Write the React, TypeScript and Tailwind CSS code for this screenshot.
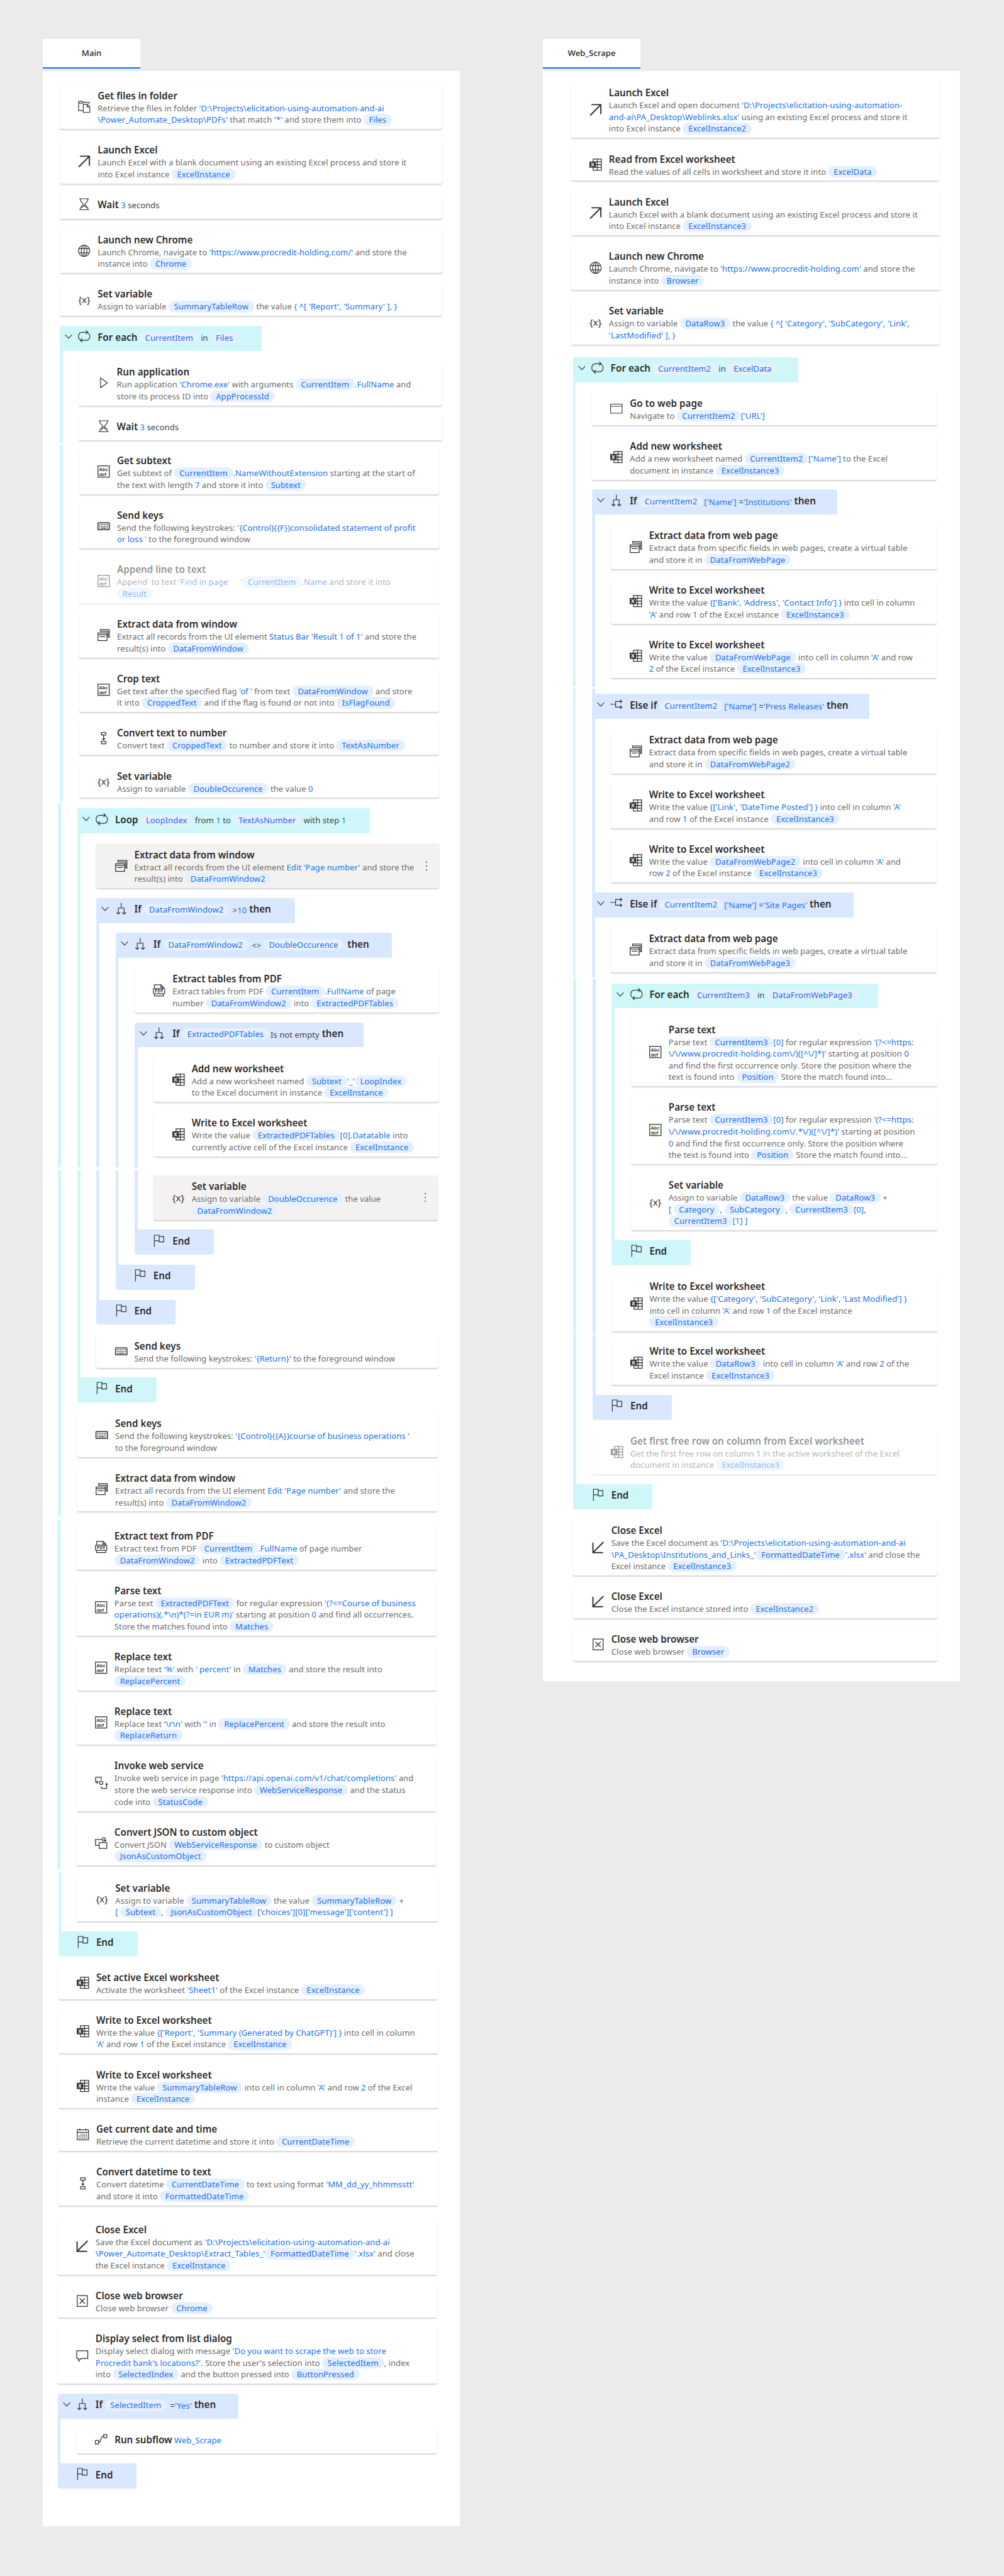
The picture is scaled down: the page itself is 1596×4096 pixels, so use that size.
import type { ReactNode } from 'react';

/*
 * Text markup used in the flow data:
 *   «Name»  a variable pill
 *   ‹text›  a literal value, drawn in blue
 */

type IconName =
  | 'files' | 'launch' | 'wait' | 'globe' | 'var' | 'loop' | 'play' | 'abc' | 'keys' | 'windows'
  | 'convert' | 'if' | 'elseif' | 'pdf' | 'excel' | 'end' | 'service' | 'json' | 'calendar'
  | 'close' | 'closebox' | 'comment' | 'subflow' | 'browser';

type Item = {
  kind?: 'card' | 'head' | 'elseif' | 'end';
  tone?: 'c' | 'b';
  rails?: string;
  icon: IconName;
  title: string;
  extra?: string;
  tail?: string;
  lines?: string[];
  width?: string;
  gap?: string;
  hovered?: boolean;
  disabled?: boolean;
};

const Svg = ({ children, w = 1.2 }: { children: ReactNode; w?: number }) => (
  <svg
    viewBox="0 0 20 20"
    className="block size-[19.500px] overflow-visible"
    fill="none"
    stroke="#323130"
    strokeWidth={w}
  >
    {children}
  </svg>
);

function Icon({ name }: { name: IconName }) {
  switch (name) {
    case 'files':
      return (
        <Svg>
          <path d="M8 16.3H1V1.2h6.2l1.4 1.7h9.6v2.6M1 4.3h6.2l1.4-1.4" />
          <path d="M8.600 6.200h6.600l4 4v9H8.600zM15 6.400v4h4" />
        </Svg>
      );
    case 'launch':
      return (
        <Svg w={2}>
          <path d="M3.200 1.400h15.400V17M18.400 1.600 1.200 19" />
        </Svg>
      );
    case 'close':
      return (
        <Svg w={2}>
          <path d="M1.600 2v16.200H18M1.800 18 18.800 1" />
        </Svg>
      );
    case 'wait':
      return (
        <Svg>
          <path d="M2 1h16M2 19h16M4 1v2.600c0 2.400 4.600 4.600 4.600 6.400S4 14 4 16.400V19M16 1v2.600c0 2.400-4.600 4.600-4.600 6.400s4.600 4 4.600 6.400V19M5.800 16l4.200-4.400 4.200 4.400" />
        </Svg>
      );
    case 'globe':
      return (
        <Svg>
          <circle cx="10" cy="10" r="9.200" />
          <ellipse cx="10" cy="10" rx="4.600" ry="9.200" />
          <path d="M10 .8v18.400M1.600 6.600h16.800M1.600 13.400h16.800" />
        </Svg>
      );
    case 'var':
      return (
        <span className="flex h-5 items-center text-[15px] leading-none text-[#323130]">
          {'{x}'}
        </span>
      );
    case 'loop':
      return (
        <Svg>
          <path d="M6 17C-1.500 14.500-1 3.400 7.600 3.400H16M12.800.4l3.200 3-3.200 3M14 3.400c7.500 2.300 7 13.200-1.600 13.200H4M7.200 13.600l-3.200 3 3.200 3" />
        </Svg>
      );
    case 'play':
      return (
        <Svg>
          <path d="M5 2v16l11-8z" />
        </Svg>
      );
    case 'abc':
      return (
        <Svg w={1.3}>
          <rect x=".8" y=".8" width="18.400" height="18.400" />
          <text x="2.600" y="8.800" fontSize="8" fontWeight="600" fill="#323130" stroke="none" textLength="14.600">
            Abc
          </text>
          <text x="2.600" y="17.200" fontSize="8" fontWeight="600" fill="#323130" stroke="none" textLength="12">
            def
          </text>
        </Svg>
      );
    case 'keys':
      return (
        <Svg>
          <rect x=".6" y="4.400" width="18.800" height="11.200" rx=".8" strokeWidth="1.500" />
          <path d="M2.600 7.200h15M2.600 10h15" strokeDasharray="1.500 1.200" strokeWidth="1.400" />
          <path d="M2.600 12.900h1.600M5.200 12.900h9.600M15.800 12.900h1.600" strokeWidth="1.400" />
        </Svg>
      );
    case 'windows':
      return (
        <Svg w={1.3}>
          <rect x=".8" y="6.600" width="14.600" height="12.400" />
          <path d="M.8 9.400h14.600M3.400 12.600h9.400M4.600 4.200V1.200h14.600v12.600h-2.200M4.600 3.800h12.600v9.800" />
        </Svg>
      );
    case 'convert':
      return (
        <Svg w={1.3}>
          <rect x="6.400" y=".8" width="7.200" height="4" />
          <rect x="6.400" y="15.200" width="7.200" height="4" />
          <path d="M10 4.800v8M7.800 10.400l2.200 2.400 2.200-2.400" />
        </Svg>
      );
    case 'if':
      return (
        <Svg>
          <path d="M10 .6v8.400M5.300 19V9h9.400v10M2.200 16.200 5.300 19l3-2.800M11.700 16.200l3 2.800 3.100-2.800" />
        </Svg>
      );
    case 'elseif':
      return (
        <Svg>
          <path d="M.2 9h8.600M19 4.400H8.800v9.400H19M16.200 1.600 19 4.400l-2.800 2.800M16.200 11l2.800 2.800-2.800 2.800" />
        </Svg>
      );
    case 'pdf':
      return (
        <Svg w={1.3}>
          <path d="M2.600 7V1h10.600l4.200 4v2M13 1v4.200h4.400M2.600 15.400V19h14.800v-3.600" />
          <rect x=".8" y="7" width="18.400" height="8.400" rx=".8" />
          <text x="3" y="13.800" fontSize="7" fontWeight="700" fill="#323130" stroke="none" textLength="14">
            PDF
          </text>
        </Svg>
      );
    case 'excel':
      return (
        <Svg w={1.3}>
          <path d="M6 5V1h13.400v18H6v-4M6 5.400h13.400M10 10h9.400M6 14.600h13.400M12.800 1v18" />
          <rect x="0" y="5" width="10.400" height="10" fill="#323130" stroke="none" />
          <path d="m2.800 7 4.600 6M7.400 7l-4.600 6" stroke="#fff" strokeWidth="1.400" />
        </Svg>
      );
    case 'end':
      return (
        <Svg>
          <path d="M2.400 20V1h7.800v9.200H2.400M10.200 3.200h7.600v8.800h-7.600v-2" />
        </Svg>
      );
    case 'service':
      return (
        <Svg w={1.3}>
          <path d="M5.400 9H1V1h9.200v4.400M10.400 16v3H19v-8M2.600 11 4.800 8.800 2.800 6.800M17 13.200l2-2.400 1.400 2.400" />
          <circle cx="10" cy="10" r="2.800" />
        </Svg>
      );
    case 'json':
      return (
        <Svg w={1.3}>
          <path d="M6.800 13.400H.8V4h12v5.200M6.800 9.200h12.400v9.400H6.800zM11 1.400h5.400v5.400M14.200 4.800l2.200 2.400 2.200-2.400" />
        </Svg>
      );
    case 'calendar':
      return (
        <Svg>
          <rect x=".8" y="2.600" width="18.400" height="16.400" />
          <path d="M.8 6.800h18.400M5 .4v3.800M15 .4v3.800" />
          <path d="M7 9.200v8.200M10 9.200v8.200M13 9.200v8.200M16 9.200v8.200M4 11.800v5.600" strokeDasharray="1.400 1" strokeWidth="1.500" />
        </Svg>
      );
    case 'closebox':
      return (
        <Svg w={1.3}>
          <rect x="1.800" y="1.200" width="16.400" height="17.600" />
          <path d="m5.800 5.600 8.400 8.800M14.200 5.600l-8.400 8.800" />
        </Svg>
      );
    case 'comment':
      return (
        <Svg w={1.3}>
          <path d="M1 2h18v12.600H8L4.200 18.600v-4H1z" />
        </Svg>
      );
    case 'subflow':
      return (
        <Svg w={1.3}>
          <rect x=".8" y="11.600" width="5" height="6" />
          <rect x="14.200" y="2.400" width="5" height="5" />
          <path d="M5.800 14.600h1c3.600 0 2.200-9.700 5.800-9.700h1.600" />
        </Svg>
      );
    case 'browser':
      return (
        <Svg w={1.1}>
          <path d="M.6 2.600h18.800v14.800H.6zM.6 6.200h18.800" />
        </Svg>
      );
  }
}

const Chevron = () => (
  <svg viewBox="0 0 12 8" className="block h-2 w-3" fill="none" stroke="#3b3a39" strokeWidth="1.200">
    <path d="m.6 1.200 5.400 5.600 5.400-5.600" />
  </svg>
);

/* In conditions the operator and operand sit one pixel below the pill's baseline. */
const Markup = ({ text, condition = false }: { text: string; condition?: boolean }) => {
  const shift = condition ? 'align-[-1px]' : '';
  return (
    <>
      {text.split(/(«[^»]*»|‹[^›]*›)/).map((part, i) => {
        if (part.startsWith('«')) {
          return (
            <span
              key={i}
              className={`inline-block h-[18.200px] rounded-full bg-[#e5f0ff] px-[8.800px] leading-[18px] text-[#1a6df2] ${condition ? 'mr-[2px]' : ''}`}
            >
              {part.slice(1, -1)}
            </span>
          );
        }
        if (part.startsWith('‹')) {
          return (
            <span key={i} className={`text-[#1473f5] ${shift}`}>
              {part.slice(1, -1)}
            </span>
          );
        }
        return (
          <span key={i} className={shift}>
            {part}
          </span>
        );
      })}
    </>
  );
};

const Rails = ({ rails }: { rails: string }) => (
  <>
    {rails.split('').map((tone, i) => (
      <div key={i} className="flex w-[30.400px] shrink-0">
        <div className={tone === 'c' ? 'w-[4.700px] bg-[#cff7f9]' : 'w-[4.700px] bg-[#dae8ff]'} />
      </div>
    ))}
  </>
);

const HEIGHTS = ['h-[39.900px]', 'h-[52.400px]', 'h-[71px]', 'h-[89.600px]', 'h-[108.100px]'];

function Row({ item }: { item: Item }) {
  const kind = item.kind ?? 'card';
  const lines = item.lines ?? [];
  const toneBg = item.tone === 'c' ? 'bg-[#cff7f9]' : 'bg-[#dae8ff]';
  const box =
    kind === 'card'
      ? `w-full rounded-[3px] shadow-[0_1.5px_2px_rgba(0,0,0,0.17)] ${item.hovered ? 'bg-[#f3f2f1]' : 'bg-white'}`
      : kind === 'head'
        ? `rounded-t-[4px] ${toneBg} ${item.width}`
        : kind === 'elseif'
          ? `${toneBg} ${item.width}`
          : `w-[125.900px] rounded-b-[4px] ${toneBg}`;
  const slot = lines.length ? 'h-full' : 'h-[34px]';
  return (
    <div className="flex">
      <Rails rails={item.rails ?? ''} />
      <div className="flex min-w-0 grow flex-col">
        <div className={`flex shrink-0 ${item.gap ?? 'h-[15.700px]'}`}>
          {(kind === 'end' || kind === 'elseif') && <div className={`w-[4.700px] ${toneBg}`} />}
        </div>
        <div className={`flex shrink-0 ${box} ${HEIGHTS[lines.length]} ${item.disabled ? 'opacity-50' : ''}`}>
          <div className={`flex w-[60.200px] shrink-0 items-center ${slot}`}>
            <div className="flex w-[28px] justify-center">
              {(kind === 'head' || kind === 'elseif') && <Chevron />}
            </div>
            <div className="flex w-[22px] justify-center">
              <Icon name={item.icon} />
            </div>
          </div>
          <div className="grow pt-[6.500px] whitespace-pre">
            <div className="h-[22px] text-[13px] leading-[22px] tracking-[0.08px] text-[#444]">
              <span className="text-[15.200px] font-semibold tracking-normal text-[#2b2b2b]">{item.title}</span>
              {item.extra && (
                <>
                  {' '}
                  <Markup text={item.extra} condition={item.tail !== undefined} />
                </>
              )}
              {item.tail && (
                <span className="text-[15.200px] font-semibold tracking-normal text-[#2b2b2b]"> {item.tail}</span>
              )}
            </div>
            {lines.map((line, i) => (
              <div
                key={i}
                className="h-[18.600px] text-[13px] leading-[18.600px] tracking-[0.1px] text-[#6b6b6b] [word-spacing:-0.2px]"
              >
                <Markup text={line} />
              </div>
            ))}
          </div>
          {item.hovered && (
            <div className="flex w-[40px] shrink-0 flex-col items-center justify-center gap-[4px]">
              <div className="size-[2px] rounded-full bg-[#444]" />
              <div className="size-[2px] rounded-full bg-[#444]" />
              <div className="size-[2px] rounded-full bg-[#444]" />
            </div>
          )}
        </div>
      </div>
    </div>
  );
}

type SectionData = {
  pad: string;
  items: Item[];
  /* Rails drawn below the last row, and the blank strip that follows. */
  endRails?: string;
  endHeight?: string;
  space?: string;
};

const r = String.raw;

const MAIN: SectionData[] = [
  {
    pad: 'pl-[26.600px] pr-[28px]',
    endRails: 'c',
    endHeight: 'h-[3.600px]',
    space: 'h-[3.700px]',
    items: [
      {
        icon: 'files', gap: 'h-[21.100px]', title: 'Get files in folder',
        lines: [
          r`Retrieve the files in folder ‹'D:\Projects\elicitation-using-automation-and-ai›`,
          r`‹\Power_Automate_Desktop\PDFs'› that match ‹'*'› and store them into «Files»`,
        ],
      },
      {
        icon: 'launch', title: 'Launch Excel',
        lines: [
          'Launch Excel with a blank document using an existing Excel process and store it',
          'into Excel instance «ExcelInstance»',
        ],
      },
      { icon: 'wait', title: 'Wait', extra: '‹3› seconds' },
      {
        icon: 'globe', title: 'Launch new Chrome',
        lines: [
          "Launch Chrome, navigate to ‹'https://www.procredit-holding.com/'› and store the",
          'instance into «Chrome»',
        ],
      },
      {
        icon: 'var', title: 'Set variable',
        lines: ["Assign to variable «SummaryTableRow» the value ‹{ ^[ 'Report', 'Summary' ], }›"],
      },
      { kind: 'head', tone: 'c', icon: 'loop', title: 'For each', extra: '«CurrentItem» in «Files»', width: 'w-[321px]' },
      {
        rails: 'c', icon: 'play', title: 'Run application',
        lines: [
          "Run application ‹'Chrome.exe'› with arguments «CurrentItem»‹.FullName› and",
          'store its process ID into «AppProcessId»',
        ],
      },
      { rails: 'c', icon: 'wait', title: 'Wait', extra: '‹3› seconds' },
    ],
  },
  {
    pad: 'pl-[27px] pr-[32.700px]',
    endRails: 'c',
    endHeight: 'h-[6.600px]',
    space: 'h-[2.400px]',
    items: [
      {
        rails: 'c', icon: 'abc', gap: 'h-[7.100px]', title: 'Get subtext',
        lines: [
          'Get subtext of «CurrentItem»‹.NameWithoutExtension› starting at the start of',
          'the text with length ‹7› and store it into «Subtext»',
        ],
      },
      {
        rails: 'c', icon: 'keys', title: 'Send keys',
        lines: [
          "Send the following keystrokes: ‹'{Control}({F})consolidated statement of profit›",
          "‹or loss '› to the foreground window",
        ],
      },
      {
        rails: 'c', icon: 'abc', title: 'Append line to text', disabled: true,
        lines: [
          "Append  to text ‹'Find in page      '›«CurrentItem»‹.Name› and store it into",
          '«Result»',
        ],
      },
      {
        rails: 'c', icon: 'windows', title: 'Extract data from window',
        lines: [
          "Extract all records from the UI element ‹Status Bar 'Result 1 of 1'› and store the",
          'result(s) into «DataFromWindow»',
        ],
      },
      {
        rails: 'c', icon: 'abc', title: 'Crop text',
        lines: [
          "Get text after the specified flag ‹'of '› from text «DataFromWindow» and store",
          'it into «CroppedText» and if the flag is found or not into «IsFlagFound»',
        ],
      },
      {
        rails: 'c', icon: 'convert', title: 'Convert text to number',
        lines: ['Convert text «CroppedText» to number and store it into «TextAsNumber»'],
      },
      {
        rails: 'c', icon: 'var', title: 'Set variable',
        lines: ['Assign to variable «DoubleOccurence» the value ‹0›'],
      },
    ],
  },
  {
    pad: 'pl-[24.100px] pr-[32.700px]',
    endRails: 'ccbbb',
    endHeight: 'h-[16.800px]',
    space: 'h-[5px]',
    items: [
      {
        kind: 'head', tone: 'c', rails: 'c', icon: 'loop', gap: 'h-[8px]', title: 'Loop',
        extra: '«LoopIndex» from ‹1› to «TextAsNumber» with step ‹1›', width: 'w-[465.300px]',
      },
      {
        rails: 'cc', icon: 'windows', title: 'Extract data from window', hovered: true,
        lines: [
          "Extract all records from the UI element ‹Edit 'Page number'› and store the",
          'result(s) into «DataFromWindow2»',
        ],
      },
      { kind: 'head', tone: 'b', rails: 'cc', icon: 'if', title: 'If', extra: '«DataFromWindow2» >‹10›', tail: 'then', width: 'w-[315.800px]' },
      { kind: 'head', tone: 'b', rails: 'ccb', icon: 'if', title: 'If', extra: '«DataFromWindow2» <> «DoubleOccurence»', tail: 'then', width: 'w-[439.100px]' },
      {
        rails: 'ccbb', icon: 'pdf', title: 'Extract tables from PDF',
        lines: [
          'Extract tables from PDF «CurrentItem»‹.FullName› of page',
          'number «DataFromWindow2» into «ExtractedPDFTables»',
        ],
      },
      { kind: 'head', tone: 'b', rails: 'ccbb', icon: 'if', title: 'If', extra: '«ExtractedPDFTables»Is not empty', tail: 'then', width: 'w-[364.400px]' },
      {
        rails: 'ccbbb', icon: 'excel', title: 'Add new worksheet',
        lines: [
          "Add a new worksheet named «Subtext»‹'_'›«LoopIndex»",
          'to the Excel document in instance «ExcelInstance»',
        ],
      },
      {
        rails: 'ccbbb', icon: 'excel', title: 'Write to Excel worksheet',
        lines: [
          'Write the value «ExtractedPDFTables»‹[0].Datatable› into',
          'currently active cell of the Excel instance «ExcelInstance»',
        ],
      },
    ],
  },
  {
    pad: 'pl-[24.100px] pr-[34.900px]',
    endRails: 'c',
    endHeight: 'h-[8.600px]',
    space: 'h-[4.600px]',
    items: [
      {
        rails: 'ccbbb', icon: 'var', gap: 'h-[8.100px]', title: 'Set variable', hovered: true,
        lines: ['Assign to variable «DoubleOccurence» the value', '«DataFromWindow2»'],
      },
      { kind: 'end', tone: 'b', rails: 'ccbb', icon: 'end', title: 'End' },
      { kind: 'end', tone: 'b', rails: 'ccb', icon: 'end', title: 'End' },
      { kind: 'end', tone: 'b', rails: 'cc', icon: 'end', title: 'End' },
      {
        rails: 'cc', icon: 'keys', title: 'Send keys',
        lines: ["Send the following keystrokes: ‹'{Return}'› to the foreground window"],
      },
      { kind: 'end', tone: 'c', rails: 'c', icon: 'end', title: 'End' },
      {
        rails: 'c', icon: 'keys', title: 'Send keys',
        lines: [
          "Send the following keystrokes: ‹'{Control}({A})course of business operations '›",
          'to the foreground window',
        ],
      },
      {
        rails: 'c', icon: 'windows', title: 'Extract data from window',
        lines: [
          "Extract all records from the UI element ‹Edit 'Page number'› and store the",
          'result(s) into «DataFromWindow2»',
        ],
      },
    ],
  },
  {
    pad: 'pl-[22.900px] pr-[36.600px]',
    endRails: 'c',
    endHeight: 'h-[5.600px]',
    space: 'h-[4.600px]',
    items: [
      {
        rails: 'c', icon: 'pdf', gap: 'h-[8px]', title: 'Extract text from PDF',
        lines: [
          'Extract text from PDF «CurrentItem»‹.FullName› of page number',
          '«DataFromWindow2» into «ExtractedPDFText»',
        ],
      },
      {
        rails: 'c', icon: 'abc', title: 'Parse text',
        lines: [
          "Parse text «ExtractedPDFText» for regular expression ‹'(?<=Course of business›",
          r`‹operations)(.*\n)*(?=in EUR m)'› starting at position ‹0› and find all occurrences.`,
          'Store the matches found into «Matches»',
        ],
      },
      {
        rails: 'c', icon: 'abc', title: 'Replace text',
        lines: ["Replace text ‹'%'› with ‹' percent'› in «Matches» and store the result into", '«ReplacePercent»'],
      },
      {
        rails: 'c', icon: 'abc', title: 'Replace text',
        lines: [r`Replace text ‹'\r\n'› with ‹''› in «ReplacePercent» and store the result into`, '«ReplaceReturn»'],
      },
      {
        rails: 'c', icon: 'service', title: 'Invoke web service',
        lines: [
          "Invoke web service in page ‹'https://api.openai.com/v1/chat/completions'› and",
          'store the web service response into «WebServiceResponse» and the status',
          'code into «StatusCode»',
        ],
      },
      {
        rails: 'c', icon: 'json', title: 'Convert JSON to custom object',
        lines: ['Convert JSON «WebServiceResponse» to custom object', '«JsonAsCustomObject»'],
      },
    ],
  },
  {
    pad: 'pl-[24.300px] pr-[35.300px]',
    items: [
      {
        rails: 'c', icon: 'var', gap: 'h-[7.600px]', title: 'Set variable',
        lines: [
          'Assign to variable «SummaryTableRow» the value «SummaryTableRow» +',
          "‹[ ›«Subtext»‹, ›«JsonAsCustomObject»‹['choices'][0]['message']['content'] ]›",
        ],
      },
      { kind: 'end', tone: 'c', icon: 'end', title: 'End' },
      {
        icon: 'excel', title: 'Set active Excel worksheet',
        lines: ["Activate the worksheet ‹'Sheet1'› of the Excel instance «ExcelInstance»"],
      },
      {
        icon: 'excel', title: 'Write to Excel worksheet',
        lines: [
          "Write the value ‹{['Report', 'Summary (Generated by ChatGPT)'] }› into cell in column",
          "‹'A'› and row ‹1› of the Excel instance «ExcelInstance»",
        ],
      },
      {
        icon: 'excel', title: 'Write to Excel worksheet',
        lines: [
          "Write the value «SummaryTableRow» into cell in column ‹'A'› and row ‹2› of the Excel",
          'instance «ExcelInstance»',
        ],
      },
      {
        icon: 'calendar', title: 'Get current date and time',
        lines: ['Retrieve the current datetime and store it into «CurrentDateTime»'],
      },
      {
        icon: 'convert', title: 'Convert datetime to text',
        lines: [
          "Convert datetime «CurrentDateTime» to text using format ‹'MM_dd_yy_hhmmsstt'›",
          'and store it into «FormattedDateTime»',
        ],
      },
    ],
  },
  {
    pad: 'pl-[23.200px] pr-[36.100px]',
    items: [
      {
        icon: 'close', gap: 'h-[20.400px]', title: 'Close Excel',
        lines: [
          r`Save the Excel document as ‹'D:\Projects\elicitation-using-automation-and-ai›`,
          r`‹\Power_Automate_Desktop\Extract_Tables_'›«FormattedDateTime»‹'.xlsx'› and close`,
          'the Excel instance «ExcelInstance»',
        ],
      },
      { icon: 'closebox', title: 'Close web browser', lines: ['Close web browser «Chrome»'] },
      {
        icon: 'comment', title: 'Display select from list dialog',
        lines: [
          "Display select dialog with message ‹'Do you want to scrape the web to store›",
          "‹Procredit bank's locations?'›. Store the user's selection into «SelectedItem», index",
          'into «SelectedIndex» and the button pressed into «ButtonPressed»',
        ],
      },
      { kind: 'head', tone: 'b', icon: 'if', title: 'If', extra: "«SelectedItem» =‹'Yes'›", tail: 'then', width: 'w-[287.400px]' },
      { rails: 'b', icon: 'subflow', title: 'Run subflow', extra: '‹Web_Scrape›' },
      { kind: 'end', tone: 'b', icon: 'end', title: 'End' },
    ],
  },
];

const WEB: SectionData[] = [
  {
    pad: 'pl-[44.300px] pr-[31.800px]',
    items: [
      {
        icon: 'launch', gap: 'h-[16.600px]', title: 'Launch Excel',
        lines: [
          r`Launch Excel and open document ‹'D:\Projects\elicitation-using-automation-›`,
          r`‹and-ai\PA_Desktop\Weblinks.xlsx'› using an existing Excel process and store it`,
          'into Excel instance «ExcelInstance2»',
        ],
      },
      {
        icon: 'excel', title: 'Read from Excel worksheet',
        lines: ['Read the values of all cells in worksheet and store it into «ExcelData»'],
      },
      {
        icon: 'launch', title: 'Launch Excel',
        lines: [
          'Launch Excel with a blank document using an existing Excel process and store it',
          'into Excel instance «ExcelInstance3»',
        ],
      },
      {
        icon: 'globe', title: 'Launch new Chrome',
        lines: [
          "Launch Chrome, navigate to ‹'https://www.procredit-holding.com'› and store the",
          'instance into «Browser»',
        ],
      },
      {
        icon: 'var', title: 'Set variable',
        lines: [
          "Assign to variable «DataRow3» the value ‹{ ^[ 'Category', 'SubCategory', 'Link',›",
          "‹'LastModified' ], }›",
        ],
      },
    ],
  },
  {
    pad: 'pl-[47.300px] pr-[36.500px]',
    endRails: 'cb',
    endHeight: 'h-[13.400px]',
    space: 'h-[3.500px]',
    items: [
      {
        kind: 'head', tone: 'c', icon: 'loop', gap: 'h-[20.400px]', title: 'For each',
        extra: '«CurrentItem2» in «ExcelData»', width: 'w-[357.900px]',
      },
      { rails: 'c', icon: 'browser', title: 'Go to web page', lines: ["Navigate to «CurrentItem2»‹['URL']›"] },
      {
        rails: 'c', icon: 'excel', title: 'Add new worksheet',
        lines: [
          "Add a new worksheet named «CurrentItem2»‹['Name']› to the Excel",
          'document in instance «ExcelInstance3»',
        ],
      },
      {
        kind: 'head', tone: 'b', rails: 'c', icon: 'if', title: 'If',
        extra: "«CurrentItem2»‹['Name']› =‹'Institutions'›", tail: 'then', width: 'w-[389.700px]',
      },
      {
        rails: 'cb', icon: 'windows', title: 'Extract data from web page',
        lines: [
          'Extract data from specific fields in web pages, create a virtual table',
          'and store it in «DataFromWebPage»',
        ],
      },
      {
        rails: 'cb', icon: 'excel', title: 'Write to Excel worksheet',
        lines: [
          "Write the value ‹{['Bank', 'Address', 'Contact Info'] }› into cell in column",
          "‹'A'› and row ‹1› of the Excel instance «ExcelInstance3»",
        ],
      },
      {
        rails: 'cb', icon: 'excel', title: 'Write to Excel worksheet',
        lines: [
          "Write the value «DataFromWebPage» into cell in column ‹'A'› and row",
          '‹2› of the Excel instance «ExcelInstance3»',
        ],
      },
    ],
  },
  {
    pad: 'pl-[47.300px] pr-[36.500px]',
    endRails: 'cb',
    endHeight: 'h-[8.300px]',
    space: 'h-[1.600px]',
    items: [
      {
        kind: 'elseif', tone: 'b', rails: 'c', icon: 'elseif', gap: 'h-[8.300px]', title: 'Else if',
        extra: "«CurrentItem2»‹['Name']› =‹'Press Releases'›", tail: 'then', width: 'w-[440.800px]',
      },
      {
        rails: 'cb', icon: 'windows', title: 'Extract data from web page',
        lines: [
          'Extract data from specific fields in web pages, create a virtual table',
          'and store it in «DataFromWebPage2»',
        ],
      },
      {
        rails: 'cb', icon: 'excel', title: 'Write to Excel worksheet',
        lines: [
          "Write the value ‹{['Link', 'DateTime Posted'] }› into cell in column ‹'A'›",
          'and row ‹1› of the Excel instance «ExcelInstance3»',
        ],
      },
      {
        rails: 'cb', icon: 'excel', title: 'Write to Excel worksheet',
        lines: [
          "Write the value «DataFromWebPage2» into cell in column ‹'A'› and",
          'row ‹2› of the Excel instance «ExcelInstance3»',
        ],
      },
      {
        kind: 'elseif', tone: 'b', rails: 'c', icon: 'elseif', title: 'Else if',
        extra: "«CurrentItem2»‹['Name']› =‹'Site Pages'›", tail: 'then', width: 'w-[415.900px]',
      },
      {
        rails: 'cb', icon: 'windows', title: 'Extract data from web page',
        lines: [
          'Extract data from specific fields in web pages, create a virtual table',
          'and store it in «DataFromWebPage3»',
        ],
      },
    ],
  },
  {
    pad: 'pl-[48.100px] pr-[35.700px]',
    endRails: 'cb',
    endHeight: 'h-[4.700px]',
    space: 'h-[1.300px]',
    items: [
      {
        kind: 'head', tone: 'c', rails: 'cb', icon: 'loop', gap: 'h-[8px]', title: 'For each',
        extra: '«CurrentItem3» in «DataFromWebPage3»', width: 'w-[424.100px]',
      },
      {
        rails: 'cbc', icon: 'abc', title: 'Parse text',
        lines: [
          "Parse text «CurrentItem3»‹[0]› for regular expression ‹'(?<=https:›",
          r`‹\/\/www.procredit-holding.com\/)([^\/]*)'› starting at position ‹0›`,
          'and find the first occurrence only. Store the position where the',
          'text is found into «Position» Store the match found into...',
        ],
      },
      {
        rails: 'cbc', icon: 'abc', title: 'Parse text',
        lines: [
          "Parse text «CurrentItem3»‹[0]› for regular expression ‹'(?<=https:›",
          r`‹\/\/www.procredit-holding.com\/.*\/)([^\/]*)'› starting at position`,
          '‹0› and find the first occurrence only. Store the position where',
          'the text is found into «Position» Store the match found into...',
        ],
      },
      {
        rails: 'cbc', icon: 'var', title: 'Set variable',
        lines: [
          'Assign to variable «DataRow3» the value «DataRow3» +',
          '‹[ ›«Category»‹, ›«SubCategory»‹, ›«CurrentItem3»‹[0],›',
          '«CurrentItem3»‹[1] ]›',
        ],
      },
      { kind: 'end', tone: 'c', rails: 'cb', icon: 'end', title: 'End' },
      {
        rails: 'cb', icon: 'excel', title: 'Write to Excel worksheet',
        lines: [
          "Write the value ‹{['Category', 'SubCategory', 'Link', 'Last Modified'] }›",
          "into cell in column ‹'A'› and row ‹1› of the Excel instance",
          '«ExcelInstance3»',
        ],
      },
    ],
  },
  {
    pad: 'pl-[48.100px] pr-[35.700px]',
    items: [
      {
        rails: 'cb', icon: 'excel', gap: 'h-[7.900px]', title: 'Write to Excel worksheet',
        lines: [
          "Write the value «DataRow3» into cell in column ‹'A'› and row ‹2› of the",
          'Excel instance «ExcelInstance3»',
        ],
      },
      { kind: 'end', tone: 'b', rails: 'c', icon: 'end', title: 'End' },
      {
        rails: 'c', icon: 'excel', title: 'Get first free row on column from Excel worksheet', disabled: true,
        lines: [
          'Get the first free row on column ‹1› in the active worksheet of the Excel',
          'document in instance «ExcelInstance3»',
        ],
      },
      { kind: 'end', tone: 'c', icon: 'end', title: 'End' },
      {
        icon: 'close', title: 'Close Excel',
        lines: [
          r`Save the Excel document as ‹'D:\Projects\elicitation-using-automation-and-ai›`,
          r`‹\PA_Desktop\Institutions_and_Links_'›«FormattedDateTime»‹'.xlsx'› and close the`,
          'Excel instance «ExcelInstance3»',
        ],
      },
      { icon: 'close', title: 'Close Excel', lines: ['Close the Excel instance stored into «ExcelInstance2»'] },
      { icon: 'closebox', title: 'Close web browser', lines: ['Close web browser «Browser»'] },
    ],
  },
];

const Flow = ({ name, sections, height }: { name: string; sections: SectionData[]; height: string }) => (
  <div className="flex w-[662.600px] shrink-0 flex-col">
    <div className="flex h-[46.500px] w-[154.400px] items-center justify-center border-b-2 border-[#0f6cff] bg-white text-[13.200px] font-medium text-[#252525]">
      {name}
    </div>
    <div className={`mt-[4.300px] bg-white ${height}`}>
      {sections.map((section, i) => (
        <div key={i}>
          <div className={section.pad}>
            {section.items.map((item, j) => (
              <Row key={j} item={item} />
            ))}
            {section.endRails && (
              <div className={`flex ${section.endHeight}`}>
                <Rails rails={section.endRails} />
              </div>
            )}
          </div>
          {section.space && <div className={section.space} />}
        </div>
      ))}
    </div>
  </div>
);

export default function App() {
  return (
    <div className="flex h-[4096px] w-[1596px] items-start gap-[132.400px] overflow-hidden bg-[#ebebeb] pt-[62.400px] pl-[68.400px] font-['Noto_Sans','Open_Sans',sans-serif]">
      <Flow name="Main" sections={MAIN} height="h-[3904px]" />
      <Flow name="Web_Scrape" sections={WEB} height="h-[2560px]" />
    </div>
  );
}
